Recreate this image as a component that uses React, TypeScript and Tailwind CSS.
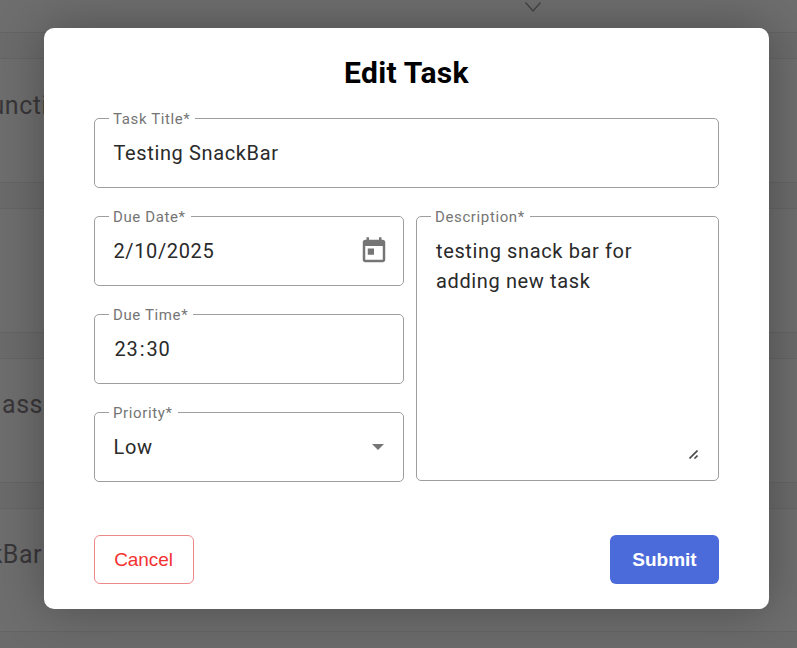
import type { ReactNode } from "react";

function BackgroundCard({ title, frame, end }: { title: string; frame: string; end: string }) {
  return (
    <div className={"flex shrink-0 items-start border-y border-[#656565] bg-[#6e6e6e] " + frame}>
      <div className={"flex h-9 shrink-0 justify-end text-[25px] leading-9 tracking-[0.5px] whitespace-nowrap text-[#383638] " + end}>
        {title}
      </div>
    </div>
  );
}

function Field({ label, className, children }: { label: string; className: string; children: ReactNode }) {
  return (
    <fieldset className={"min-w-0 rounded-[5px] border border-[#9e9e9e] pl-[14px] " + className}>
      <legend className="h-px pr-[5px] pl-1 text-[15px] leading-[3px] tracking-[0.62px] whitespace-nowrap text-[#757575]">{label}</legend>
      <div className="flex h-full pl-[5px] text-[20px] leading-[30px] tracking-[0.625px] text-[#2a2a2a]">{children}</div>
    </fieldset>
  );
}

export default function App() {
  return (
    <div className="relative h-[648px] w-[797px] overflow-hidden bg-[#6b6b6b] font-['Roboto',sans-serif]">
      <div className="flex flex-col gap-[25px]">
        <div className="flex h-[33px] shrink-0 border-b border-[#656565] bg-[#6e6e6e] pl-[525px]">
          <svg className="h-[13px] w-4" viewBox="0 0 16 13" fill="none" stroke="#444444" strokeWidth="1.4">
            <path d="M0.5 2.5 8 11l7.5-8.5" />
          </svg>
        </div>
        <BackgroundCard title="Functi" frame="h-[125px] pt-[29px]" end="w-[48px]" />
        <BackgroundCard title="" frame="h-[125px] pt-[29px]" end="w-[45px]" />
        <BackgroundCard title="Class ass" frame="h-[125px] pt-[28px]" end="w-[43px]" />
        <BackgroundCard title="SnackBar" frame="h-[124px] pt-[28px]" end="w-[42px]" />
      </div>

      <div className="absolute top-[28px] left-[44px] flex h-[581px] w-[725px] flex-col rounded-[10px] bg-white px-[50px] shadow-[0_0_50px_rgba(0,0,0,0.3)]">
        <h2 className="mt-[25px] h-10 text-center text-[30px] leading-10 font-bold tracking-[0.3px] text-black">Edit Task</h2>

        <Field label="Task Title*" className="mt-[25px] h-[70px] shrink-0">
          <span className="mt-[19px] -ml-[0.5px]">Testing SnackBar</span>
        </Field>

        <div className="mt-7 flex gap-3">
          <div className="flex w-[310px] flex-col gap-7">
            <Field label="Due Date*" className="h-[70px]">
              <span className="mt-[19px] -ml-[0.5px] flex-1">2/10/2025</span>
              <svg className="mt-[19px] mr-[14px] h-[30px] w-[30px]" viewBox="0 0 24 24" fill="#757575">
                <path d="M19 3h-1V1h-2v2H8V1H6v2H5c-1.11 0-1.99.9-1.99 2L3 19c0 1.1.89 2 2 2h14c1.1 0 2-.9 2-2V5c0-1.1-.9-2-2-2zm0 16H5V8h14v11zM7 10h5v5H7z" />
              </svg>
            </Field>
            <Field label="Due Time*" className="h-[70px]">
              <span className="mt-[19px] ml-[0.6px] flex"><span>23</span><span className="px-[1.4px]">:</span><span>30</span></span>
            </Field>
            <Field label="Priority*" className="h-[70px]">
              <span className="mt-[19px] -ml-[0.5px] flex-1">Low</span>
              <svg className="mt-[31px] mr-[19px] h-[6px] w-3" viewBox="0 0 12 6" fill="#757575">
                <path d="M0 0h12L6 6z" />
              </svg>
            </Field>
          </div>
          <Field label="Description*" className="h-[265px] w-[303px]">
            <span className="mt-[19px] w-[220px]">testing snack bar for adding new task</span>
            <svg className="mt-[233px] ml-[33px] h-[9px] w-[9px]" viewBox="0 0 9 9" fill="none" stroke="#4b4b4b" strokeWidth="1.6">
              <path d="M0.5 8.5 8.5 0.5M5.5 8.5 8.5 5.5" />
            </svg>
          </Field>
        </div>

        <div className="mt-[53px] flex justify-between font-['Liberation_Sans',sans-serif]">
          <button className="h-[49px] w-[100px] rounded-[6px] border border-[#eb8989] pt-px pr-px text-[19px] tracking-[-0.1px] text-[#f33131]">Cancel</button>
          <button className="h-[49px] w-[109px] rounded-[6px] bg-[#4c6bdb] pt-[2px] text-[19px] font-bold text-white">Submit</button>
        </div>
      </div>
    </div>
  );
}
